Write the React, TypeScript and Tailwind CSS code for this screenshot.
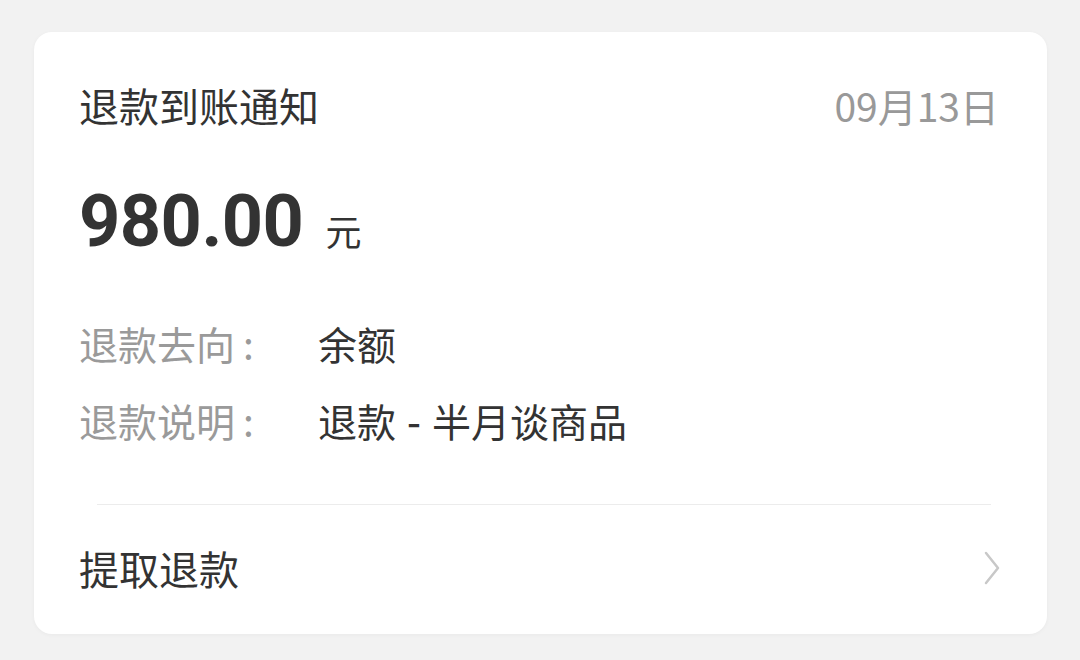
export default function App() {
  const font = { fontFamily: '"Noto Sans CJK SC", "Noto Sans", sans-serif' };
  return (
    <div className="w-[1080px] h-[660px] bg-[#f2f2f2] pt-[32px] pl-[34px]" style={font}>
      <div className="w-[1013px] h-[602px] bg-white rounded-[18px] shadow-[0_1px_4px_rgba(0,0,0,0.04)] flex flex-col">
        <div className="flex items-center justify-between pl-[45px] pr-[48px] pt-[49px]">
          <div className="text-[40px] leading-[48px] text-[#333333]">退款到账通知</div>
          <div className="text-[39px] leading-[48px] text-[#999999]">09月13日</div>
        </div>
        <div className="flex items-baseline pl-[45px] mt-[53px] h-[80px]">
          <span className="text-[72px] leading-[80px] font-bold text-[#333333] tracking-[-0.5px]" style={{ fontFamily: 'Roboto, "Noto Sans", sans-serif' }}>980.00</span>
          <span className="text-[36px] leading-[40px] text-[#333333] ml-[22px]">元</span>
        </div>
        <div className="flex items-center pl-[45px] mt-[57px] h-[48px]">
          <div className="w-[239px] text-[39px] leading-[48px] text-[#9a9a9a]">退款去向<span className="ml-[8px]">:</span></div>
          <div className="text-[39px] leading-[48px] text-[#333333]">余额</div>
        </div>
        <div className="flex items-center pl-[45px] mt-[29px] h-[48px]">
          <div className="w-[239px] text-[39px] leading-[48px] text-[#9a9a9a]">退款说明<span className="ml-[8px]">:</span></div>
          <div className="text-[39px] leading-[48px] text-[#333333]">
            退款<span className="mx-[11px] font-medium">-</span>半月谈商品
          </div>
        </div>
        <div className="ml-[63px] mr-[56px] mt-[60px] h-[1px] bg-[#ececec]" />
        <div className="flex items-center justify-between pl-[45px] pr-[46px] mt-[39px] h-[48px]">
          <div className="text-[40px] leading-[48px] text-[#333333]">提取退款</div>
          <svg width="18" height="36" viewBox="0 0 18 36" fill="none">
            <path d="M3 3 L15 18 L3 33" stroke="#c8c8c8" strokeWidth="2.5" strokeLinecap="round" strokeLinejoin="round" />
          </svg>
        </div>
      </div>
    </div>
  );
}
